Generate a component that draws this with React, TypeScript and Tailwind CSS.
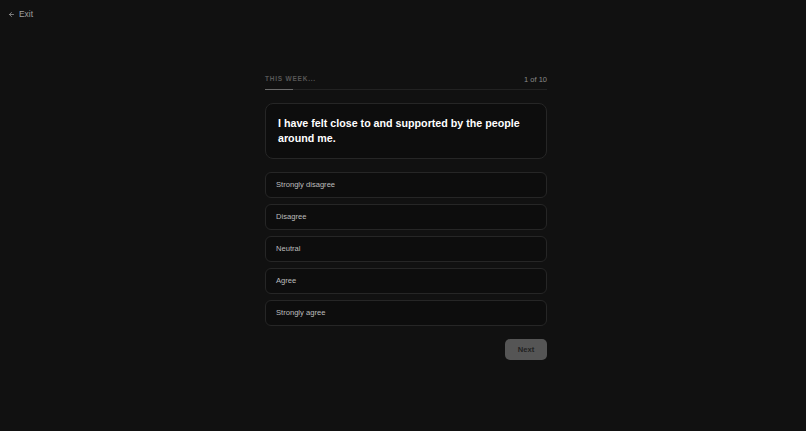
import { useState } from "react";

const OPTIONS = ["Strongly disagree", "Disagree", "Neutral", "Agree", "Strongly agree"];

export default function App() {
  const [selected, setSelected] = useState<number | null>(null);

  return (
    <div className="min-h-screen w-full bg-[#111111] font-['Liberation_Sans',Arial,sans-serif] text-[#e5e5e5]">
      <div className="px-[8px] pt-[8px]">
        <button type="button" className="flex items-center gap-[4px] text-[8.4px] text-[#a0a0a0]">
          <svg width="7" height="7" viewBox="0 0 24 24" fill="none" stroke="currentColor" strokeWidth="2.5" strokeLinecap="round" strokeLinejoin="round">
            <path d="M19 12H5" />
            <path d="M12 19l-7-7 7-7" />
          </svg>
          Exit
        </button>
      </div>

      <div className="flex justify-center pl-[6px]">
        <div className="mt-[53px] w-[282px]">
          {/* Header + progress */}
          <div className="flex items-center justify-between pb-[4px]">
            <span className="text-[6.5px] font-bold uppercase tracking-[0.12em] text-[#575757]">This week...</span>
            <span className="text-[7.5px] text-[#8a8a8a]">1 of 10</span>
          </div>
          <div className="h-px w-full bg-[#222222]">
            <div className="h-px w-[10%] bg-[#6a6a6a]" />
          </div>

          {/* Question */}
          <div className="mt-[13px] rounded-[8px] border border-[#262626] bg-[#0d0d0d] px-[12px] py-[12px]">
            <p className="text-[10.7px] font-bold leading-[15px] text-white">
              I have felt close to and supported by the people around me.
            </p>
          </div>

          {/* Options */}
          <div className="mt-[13px] flex flex-col gap-[6px]">
            {OPTIONS.map((o, i) => (
              <button
                key={o}
                type="button"
                onClick={() => setSelected(i)}
                className={`flex h-[26px] items-center rounded-[6px] border px-[10px] text-left text-[7.6px] text-[#bdbdbd] ${
                  selected === i ? "border-[#555555] bg-[#1a1a1a]" : "border-[#262626] bg-[#0d0d0d]"
                }`}
              >
                {o}
              </button>
            ))}
          </div>

          <div className="mt-[13px] flex justify-end">
            <button
              type="button"
              className="h-[21px] w-[42px] rounded-[5px] bg-[#555555] text-[7.6px] font-bold text-[#222222]"
            >
              Next
            </button>
          </div>
        </div>
      </div>
    </div>
  );
}
